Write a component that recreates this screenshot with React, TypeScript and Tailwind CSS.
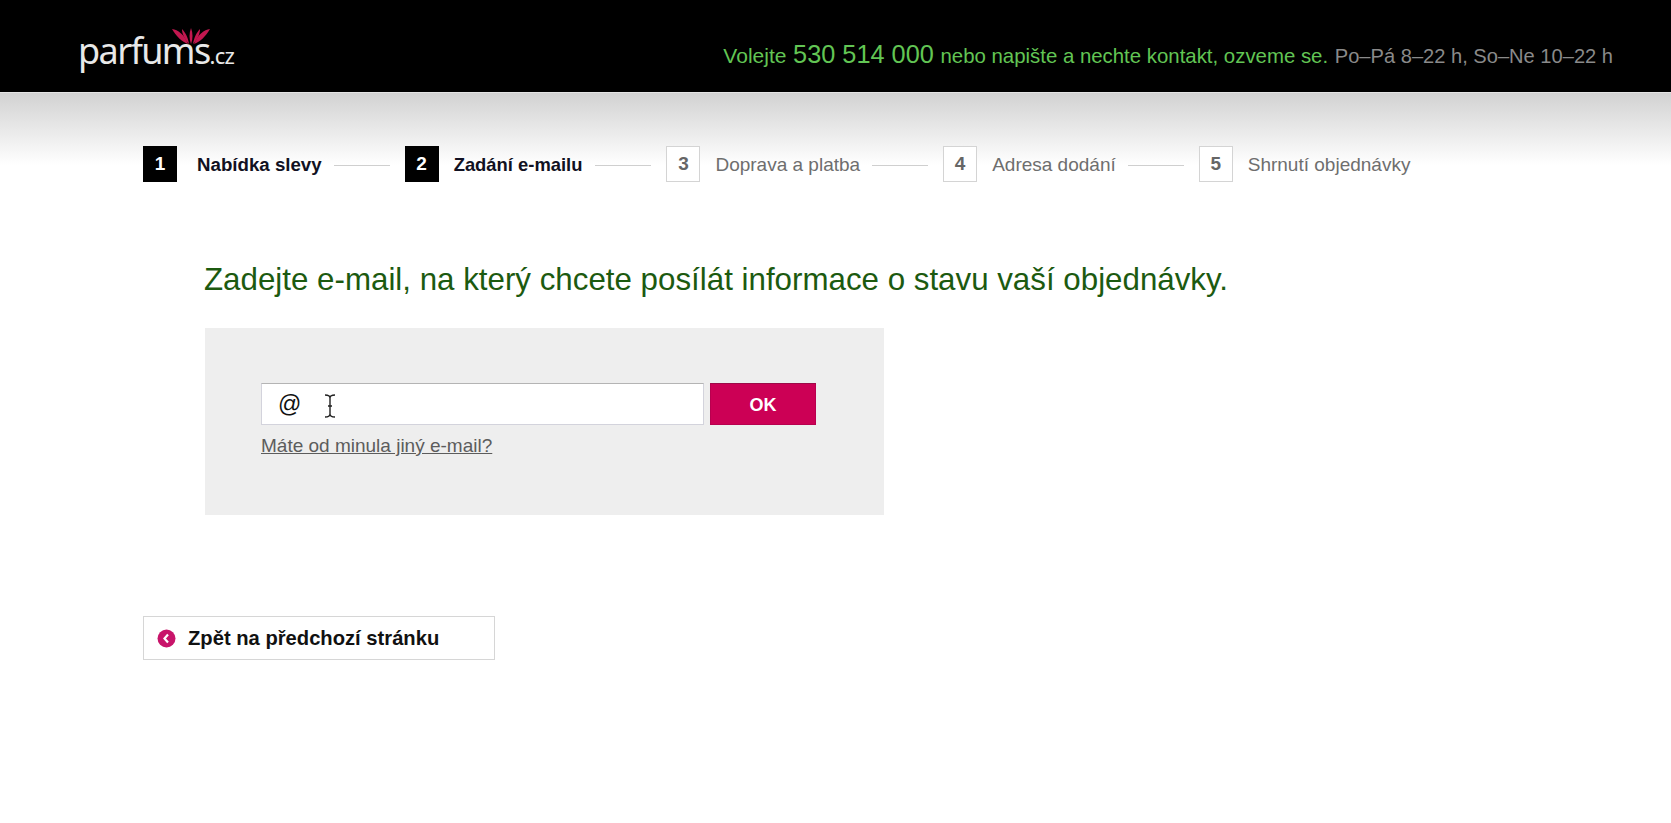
const font = { fontFamily: '"Liberation Sans", Arial, sans-serif' };

type StepProps = { n: number; label: string; active?: boolean; line?: boolean; labelClass: string; lineClass?: string };

function Step({ n, label, active, line = true, labelClass, lineClass }: StepProps) {
  return (
    <div className="flex items-center">
      <div
        className={
          active
            ? "flex h-[36px] w-[34px] shrink-0 items-center justify-center bg-black text-[19px] font-bold text-white"
            : "flex h-[36px] w-[34px] shrink-0 items-center justify-center border border-[#d4d4d4] bg-white text-[19px] font-bold text-[#666666]"
        }
      >
        {n}
      </div>
      <span className={labelClass}>{label}</span>
      {line && <div className={lineClass} />}
    </div>
  );
}

const plainLabel = "mt-[2px] ml-[15px] whitespace-nowrap text-[19px] text-[#6e6e6e]";
const plainLine = "mt-[2px] mr-[15px] ml-[12px] h-px w-[56px] bg-[#cfcfcf]";

export default function App() {
  return (
    <div className="min-h-[823px] bg-white" style={font}>
      <header className="flex h-[93px] items-center justify-between border-b border-b-[#e4e4e4] bg-black pt-[18px] pr-[58px] pl-[78px]">
        <div className="relative mt-[-8px] flex items-baseline text-[#e8e8e8]" style={{ fontFamily: '"Noto Sans", sans-serif' }}>
          <span className="text-[36px] leading-none font-normal tracking-[-1.6px]">parfums</span>
          <span className="text-[22px] leading-none font-normal tracking-[-0.8px]">.cz</span>
          <svg className="absolute top-[-5px] left-[94px]" width="38" height="18" viewBox="0 0 38 18">
            <g fill="#c2174f">
              <path d="M0 1 C6 2 12 6 16 16 C10 14 4 8 0 1Z" />
              <path d="M38 1 C32 2 26 6 22 16 C28 14 34 8 38 1Z" />
              <path d="M10 1 C13 4 16 9 17 16 C13 12 10 6 10 1Z" />
              <path d="M28 1 C25 4 22 9 21 16 C25 12 28 6 28 1Z" />
              <path d="M19 0 C21 5 21 11 19 16 C17 11 17 5 19 0Z" />
            </g>
          </svg>
        </div>
        <p className="whitespace-nowrap text-[20.4px] text-[#62c554]">
          <span className="text-[21px]">Volejte</span> <span className="mr-[1px] ml-[1px] text-[25.3px]">530 514 000</span> nebo napište a nechte kontakt, ozveme se.{" "}
          <span className="ml-[1px] text-[20.1px] text-[#8a8a8a]">Po–Pá 8–22 h, So–Ne 10–22 h</span>
        </p>
      </header>

      <div className="bg-gradient-to-b from-[#d2d2d2] to-white to-[72px] px-[143px] pt-[53px]">
        <nav className="flex items-center">
          <Step
            n={1}
            label="Nabídka slevy"
            active
            labelClass="mt-[2px] ml-[20px] whitespace-nowrap text-[18.7px] font-bold text-[#111122]"
            lineClass="mt-[2px] mr-[15px] ml-[12px] h-px w-[56px] bg-[#cfcfcf]"
          />
          <Step
            n={2}
            label="Zadání e-mailu"
            active
            labelClass="mt-[2px] ml-[15px] whitespace-nowrap text-[18.4px] font-bold text-[#111122]"
            lineClass="mt-[2px] mr-[15px] ml-[13px] h-px w-[56px] bg-[#cfcfcf]"
          />
          <Step n={3} label="Doprava a platba" labelClass={plainLabel} lineClass={plainLine} />
          <Step n={4} label="Adresa dodání" labelClass={plainLabel} lineClass={plainLine} />
          <Step n={5} label="Shrnutí objednávky" line={false} labelClass={plainLabel} />
        </nav>
      </div>

      <main className="px-[143px]">
        <div className="pl-[62px]">
          <h1 className="mt-[80px] ml-[-1px] whitespace-nowrap text-[31.3px] leading-[36px] font-normal text-[#1c5a10]">
            Zadejte e-mail, na který chcete posílát informace o stavu vaší objednávky.
          </h1>
          <section className="mt-[30px] h-[187px] w-[679px] bg-[#eeeeee] pt-[55px] pl-[56px]">
            <div className="flex gap-[6px]">
              <div className="relative flex h-[42px] w-[443px] items-center border border-[#d3d3dc] border-t-[#b4b4b4] bg-white pl-[16px] text-[23px] text-[#111111]">
                <span>@</span>
                <svg className="absolute top-[10px] left-[62px]" width="12" height="24" viewBox="0 0 12 24" fill="none" stroke="#222222" strokeWidth="1.4">
                  <path d="M1 1 C4 1 6 2 6 4 C6 2 8 1 11 1" />
                  <path d="M1 23 C4 23 6 22 6 20 C6 22 8 23 11 23" />
                  <path d="M6 4 V20 M4 12 H8" />
                </svg>
              </div>
              <button className="h-[42px] w-[106px] border border-[#b8004f] border-t-[#9c0a48] bg-[#cc0055] pt-[3px] text-[18px] font-bold text-white">
                OK
              </button>
            </div>
            <a className="mt-[10px] block text-[19px] leading-[22px] text-[#5c5c5c] underline">Máte od minula jiný e-mail?</a>
          </section>
        </div>

        <a className="mt-[101px] flex h-[44px] w-[352px] items-center border border-[#d6d6d6] pl-[13px] text-[20.2px] font-bold text-[#111111]">
          <svg width="19" height="19" viewBox="0 0 19 19" className="mr-[12px]">
            <circle cx="9.5" cy="9.5" r="9" fill="#c8146a" />
            <path d="M11 5.5 L7.5 9.5 L11 13.5" fill="none" stroke="#ffffff" strokeWidth="2.2" />
          </svg>
          Zpět na předchozí stránku
        </a>
      </main>
    </div>
  );
}
